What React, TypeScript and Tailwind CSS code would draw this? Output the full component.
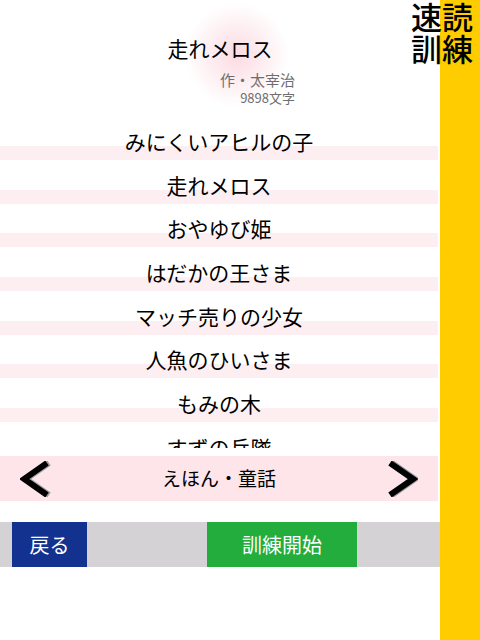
import React from 'react';

const books = [
  'みにくいアヒルの子',
  '走れメロス',
  'おやゆび姫',
  'はだかの王さま',
  'マッチ売りの少女',
  '人魚のひいさま',
  'もみの木',
  'すずの兵隊',
];

const jp = { fontFamily: '"Noto Sans CJK JP", "Noto Sans", sans-serif' };

function Chevron({ dir }: { dir: 'left' | 'right' }) {
  const pts = dir === 'left' ? '27,2 4,18 27,34' : '4,2 27,18 4,34';
  const shadow = dir === 'left' ? '29,2 6,18 29,34' : '6,2 29,18 6,34';
  return (
    <svg width="32" height="36" viewBox="0 0 32 36">
      <polyline points={shadow} fill="none" stroke="#9a9a9a" strokeWidth="6" />
      <polyline points={pts} fill="none" stroke="#000" strokeWidth="6" />
    </svg>
  );
}

export default function App() {
  return (
    <div className="relative flex w-[480px] h-[640px] bg-white overflow-hidden" style={jp}>
      {/* main column */}
      <div className="w-[440px] flex flex-col">
        {/* selected book header */}
        <div className="h-[120px] flex flex-col items-center bg-[radial-gradient(circle_at_237px_55px,#fcdbe2_0px,#fdeef1_28px,#ffffff_52px)]">
          <div className="mt-[35px] text-[21px] leading-[26px] text-black">走れメロス</div>
          <div className="w-full flex flex-col items-end pr-[145px]">
            <div className="mt-[10px] text-[15px] leading-[17px] text-[#6e6e6e]">作・太宰治</div>
            <div className="mt-[3px] text-[13px] leading-[14px] text-[#6e6e6e]">9898文字</div>
          </div>
        </div>

        {/* book list */}
        <div className="h-[328px] overflow-hidden">
          {books.map((b) => (
            <div
              key={b}
              className="h-[43.7px] pt-[8px] text-center text-[21px] leading-[26px] text-black bg-[linear-gradient(to_bottom,transparent_26px,#fdeef2_26px,#fdeef2_40px,transparent_40px)] mr-[2px]"
            >
              {b}
            </div>
          ))}
        </div>

        {/* category selector */}
        <div className="mt-[8px] h-[45px] mr-[2px] bg-[#fde5ea] flex items-center justify-between px-[20px]">
          <Chevron dir="left" />
          <div className="text-[19px] text-black">えほん・童話</div>
          <Chevron dir="right" />
        </div>

        {/* bottom buttons */}
        <div className="mt-[21px] h-[45px] bg-[#d5d2d5] flex items-stretch">
          <div className="ml-[12px] w-[75px] bg-[#13318f] text-white text-[20px] flex items-center justify-center">
            戻る
          </div>
          <div className="ml-[120px] w-[150px] bg-[#22ad3c] text-white text-[20px] flex items-center justify-center">
            訓練開始
          </div>
        </div>
      </div>

      {/* yellow side column */}
      <div className="w-[40px] h-full bg-[#ffcc00]" />

      {/* logo */}
      <div className="absolute top-0 right-[7px] grid grid-cols-2 text-[31px] leading-[32px] font-medium text-black">
        <span>速</span>
        <span>読</span>
        <span>訓</span>
        <span>練</span>
      </div>
    </div>
  );
}
